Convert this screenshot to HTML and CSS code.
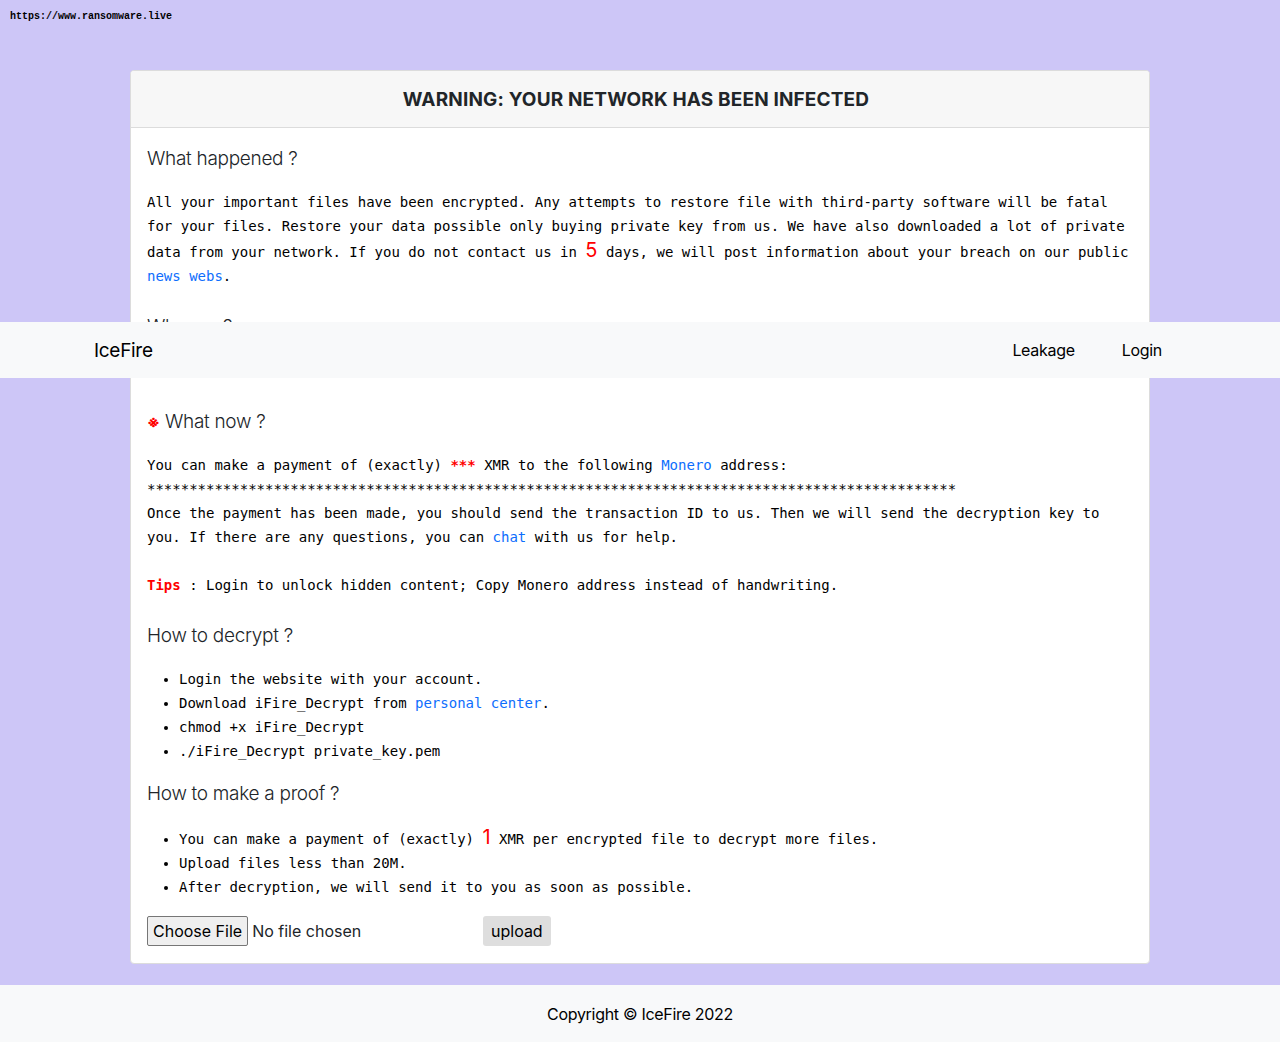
FILE: index.html
```html
<!DOCTYPE html>
<html lang="en">
<head>
<meta charset="utf-8">
<title>IceFire</title>
<link rel="stylesheet" href="styles.css">
</head>
<body>
<div class="source">https://www.ransomware.live</div>
<main class="page">
  <section class="card">
    <header class="card-header">WARNING: YOUR NETWORK HAS BEEN INFECTED</header>
    <div class="card-body">
      <h5 class="sec-title">What happened ?</h5>
      <p class="mono">All your important files have been encrypted. Any attempts to restore file with third-party software will be fatal for your files. Restore your data possible only buying private key from us. We have also downloaded a lot of private data from your network. If you do not contact us in <span class="big-red">5</span> days, we will post information about your breach on our public <a class="link" href="#">news webs</a>.</p>

      <h5 class="sec-title">Why me ?</h5>
      <p class="mono hidden-line">We are not a political company, we are only interested in money. Your data is kept safe as long as you pay.</p>

      <h5 class="sec-title"><span class="mark">※</span> What now ?</h5>
      <p class="mono">You can make a payment of (exactly) <span class="red-bold">***</span> XMR to the following <a class="link" href="#">Monero</a> address:<br>************************************************************************************************<br>Once the payment has been made, you should send the transaction ID to us. Then we will send the decryption key to you. If there are any questions, you can <a class="link" href="#">chat</a> with us for help.<br><br><span class="red-bold">Tips</span> : Login to unlock hidden content; Copy Monero address instead of handwriting.</p>

      <h5 class="sec-title">How to decrypt ?</h5>
      <ul class="mono list list-a">
        <li>Login the website with your account.</li>
        <li>Download iFire_Decrypt from <a class="link" href="#">personal center</a>.</li>
        <li>chmod +x iFire_Decrypt</li>
        <li>./iFire_Decrypt private_key.pem</li>
      </ul>

      <h5 class="sec-title">How to make a proof ?</h5>
      <ul class="mono list">
        <li>You can make a payment of (exactly) <span class="big-red">1</span> XMR per encrypted file to decrypt more files.</li>
        <li>Upload files less than 20M.</li>
        <li>After decryption, we will send it to you as soon as possible.</li>
      </ul>

      <form class="upload-row">
        <input class="file-input" type="file">
        <button class="upload-btn" type="button">upload</button>
      </form>
    </div>
  </section>
</main>
<footer class="footer">Copyright © IceFire 2022</footer>

<nav class="navbar">
  <a class="brand" href="#">IceFire</a>
  <div class="nav-links">
    <a class="nav-link" href="#">Leakage</a>
    <a class="nav-link" href="#">Login</a>
  </div>
</nav>
</body>
</html>
```

FILE: styles.css
```css
* { box-sizing: border-box; }

html, body {
  margin: 0;
  padding: 0;
}

body {
  background: #cdc6f7;
  font-family: Inter, "Liberation Sans", sans-serif;
  color: #212529;
  position: relative;
  min-height: 1042px;
}

.source {
  position: absolute;
  top: 11px;
  left: 10px;
  font-family: "Liberation Mono", monospace;
  font-weight: 700;
  font-size: 10px;
  line-height: 12px;
  color: #000;
}

.page {
  padding-top: 70px;
  padding-bottom: 21px;
}

.card {
  width: 1020px;
  margin: 0 auto;
  background: #fff;
  border: 1px solid #dcdcdc;
  border-radius: 4px;
  overflow: hidden;
}

.card-header {
  background: #f7f7f7;
  border-bottom: 1px solid #dcdcdc;
  height: 57px;
  padding-right: 8px;
  display: flex;
  align-items: center;
  justify-content: center;
  font-size: 19px;
  letter-spacing: 0.15px;
  font-weight: 700;
  color: #212529;
}

.card-body {
  padding: 8px 16px 17px;
  display: flex;
  flex-direction: column;
}

.sec-title {
  margin: 8px 0 16px;
  font-size: 19px;
  letter-spacing: -0.3px;
  line-height: 30px;
  font-weight: 300;
  color: #212529;
}

.mark {
  color: #ff0000;
  font-size: 16px;
  font-weight: 700;
  letter-spacing: 0;
}

.mono {
  font-family: "DejaVu Sans Mono", monospace;
  font-size: 14px;
  line-height: 24px;
  color: #000;
  margin: 0 0 16px;
}

.hidden-line {
  margin-bottom: 17px;
}

.big-red {
  font-family: Inter, "Liberation Sans", sans-serif;
  color: #ff0000;
  font-size: 20px;
  line-height: 24px;
}

.red-bold {
  color: #ff0000;
  font-weight: 700;
}

.link {
  color: #0d6efd;
  text-decoration: none;
}

.list {
  padding-left: 32px;
}

.list-a {
  margin-bottom: 8px;
}

.upload-row {
  display: flex;
  align-items: center;
  height: 30px;
  margin: 1px 0 0;
}

.file-input {
  width: 336px;
  font-family: Inter, "Liberation Sans", sans-serif;
  font-size: 16px;
  color: #212529;
}

.file-input::file-selector-button {
  font-family: Inter, "Liberation Sans", sans-serif;
  font-size: 16px;
  height: 30px;
  padding: 0 5px;
  margin-right: 4px;
  background: #efefef;
  border: 1px solid #767676;
  border-radius: 2px;
  color: #000;
}

.upload-btn {
  height: 30px;
  padding: 0 8px;
  border: none;
  border-radius: 3px;
  background: #dedede;
  font-family: Inter, "Liberation Sans", sans-serif;
  font-size: 16px;
  color: #000;
}

.footer {
  background: #f8f9fa;
  height: 58px;
  display: flex;
  align-items: center;
  justify-content: center;
  font-size: 16px;
  letter-spacing: -0.3px;
  color: #000;
}

.navbar {
  position: absolute;
  top: 322px;
  left: 0;
  right: 0;
  height: 56px;
  background: #f8f9fa;
  display: flex;
  align-items: center;
  justify-content: space-between;
  padding: 0 118px 0 94px;
}

.brand {
  font-size: 19px;
  letter-spacing: -0.3px;
  color: #000;
  text-decoration: none;
}

.nav-links {
  display: flex;
  gap: 47px;
}

.nav-link {
  font-size: 16px;
  letter-spacing: -0.3px;
  color: #000;
  text-decoration: none;
}
```
